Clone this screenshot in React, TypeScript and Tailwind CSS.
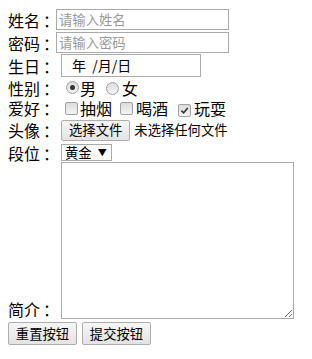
import { useState } from 'react';

const font = { fontFamily: '"Microsoft YaHei", "Noto Sans CJK SC", sans-serif' };

const Radio = ({ checked }: { checked?: boolean }) => (
  <span className="inline-flex h-[13px] w-[13px] items-center justify-center rounded-full border border-[#a0a0a0] bg-gradient-to-b from-[#dcdcdc] to-[#f4f4f4]">
    {checked && <span className="h-[5px] w-[5px] rounded-full bg-[#333]" />}
  </span>
);

const Check = ({ checked }: { checked?: boolean }) => (
  <span className="inline-flex h-[13px] w-[13px] items-center justify-center rounded-[2px] border border-[#a0a0a0] bg-gradient-to-b from-[#dcdcdc] to-[#f4f4f4]">
    {checked && (
      <svg viewBox="0 0 10 10" className="h-[9px] w-[9px]">
        <path d="M1.5 5.2 L4 7.6 L8.6 2.2" fill="none" stroke="#333" strokeWidth="1.8" />
      </svg>
    )}
  </span>
);

// 标签：冒号稍微往右挪一点
const Label = ({ text, w }: { text: string; w: string }) => (
  <span className={`${w} shrink-0 whitespace-nowrap leading-none`}>
    {text}
    <span className="ml-[3px]">：</span>
  </span>
);

const btn =
  'rounded-[2px] border border-[#adadad] bg-gradient-to-b from-[#f6f6f6] to-[#e3e3e3] text-[13.33px] leading-none';

export default function App() {
  const [intro, setIntro] = useState('');

  return (
    <div className="bg-white px-2 pt-2 text-[16px] text-black" style={font}>
      {/* 姓名 */}
      <div className="flex h-[23px] items-center">
        <Label text="姓名" w="w-[48px]" />
        <input
          placeholder="请输入姓名"
          className="h-[21px] w-[173px] border border-[#a9a9a9] px-[2px] text-[13.33px] outline-none placeholder:text-[#999]"
        />
      </div>

      {/* 密码 */}
      <div className="flex h-[23px] items-center">
        <Label text="密码" w="w-[48px]" />
        <input
          type="password"
          placeholder="请输入密码"
          className="h-[21px] w-[173px] border border-[#a9a9a9] px-[2px] text-[13.33px] outline-none placeholder:text-[#999]"
        />
      </div>

      {/* 生日 */}
      <div className="flex h-[23px] items-center">
        <Label text="生日" w="w-[53px]" />
        <div className="flex h-[23px] w-[140px] items-center border border-[#a9a9a9] pl-[10px] text-[14px]">
          年&nbsp;&nbsp;/月/日
        </div>
      </div>

      {/* 性别 */}
      <div className="flex h-[21px] items-center">
        <Label text="性别" w="w-[58px]" />
        <Radio checked />
        <span className="ml-[1px] leading-none">男</span>
        <span className="ml-[10px]"><Radio /></span>
        <span className="ml-[3px] leading-none">女</span>
      </div>

      {/* 爱好 */}
      <div className="flex h-[20px] items-center">
        <Label text="爱好" w="w-[57px]" />
        <Check />
        <span className="ml-[2px] leading-none">抽烟</span>
        <span className="ml-[8px]"><Check /></span>
        <span className="ml-[3px] leading-none">喝酒</span>
        <span className="ml-[10px]"><Check checked /></span>
        <span className="ml-[3px] leading-none">玩耍</span>
      </div>

      {/* 头像 */}
      <div className="flex h-[24px] items-center">
        <Label text="头像" w="w-[53px]" />
        <button className={`h-[21px] px-[7px] ${btn}`}>选择文件</button>
        <span className="ml-[4px] text-[13.33px] leading-none">未选择任何文件</span>
      </div>

      {/* 段位 */}
      <div className="flex h-[21px] items-center">
        <Label text="段位" w="w-[53px]" />
        <div className="flex h-[17px] w-[51px] items-center border border-[#a9a9a9] pl-[3px] text-[13.33px] leading-none">
          黄金
          <span className="ml-[6px] text-[9px]">▼</span>
        </div>
      </div>

      {/* 简介 */}
      <div className="mt-[-1px] flex items-end">
        <span className="w-[53px] shrink-0 whitespace-nowrap pb-[1px] leading-[18px]">
          简介<span className="ml-[3px]">：</span>
        </span>
        <textarea
          value={intro}
          onChange={(e) => setIntro(e.target.value)}
          className="block h-[157px] w-[233px] border border-[#a9a9a9] text-[13.33px] outline-none"
        />
      </div>

      {/* 按钮 */}
      <div className="mt-[3px] flex gap-[5px]">
        <button className={`h-[23px] w-[69px] ${btn}`}>重置按钮</button>
        <button className={`h-[23px] w-[69px] ${btn}`}>提交按钮</button>
      </div>
    </div>
  );
}
